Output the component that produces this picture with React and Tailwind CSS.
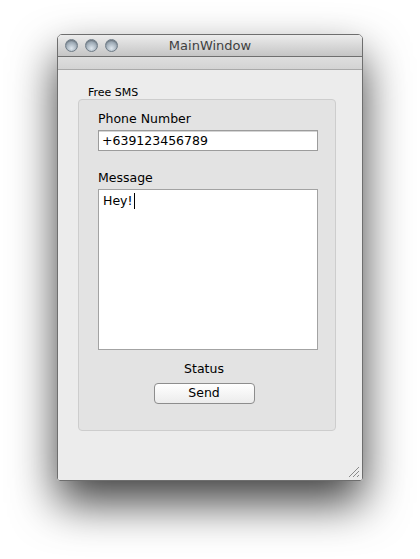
const font = { fontFamily: '"DejaVu Sans", "Liberation Sans", sans-serif' };

// traffic light button
function Light() {
  return (
    <div className="w-[13px] h-[13px] rounded-full border border-[#6f7c87] bg-[radial-gradient(circle_at_50%_75%,#dfe7ee_0%,#a2afba_55%,#7f8c98_100%)] shadow-[inset_0_1px_1px_rgba(0,0,0,0.25)]" />
  );
}

function ResizeGrip() {
  return (
    <svg width="12" height="12" viewBox="0 0 12 12" className="absolute right-[2px] bottom-[2px]">
      <line x1="1" y1="11" x2="11" y2="1" stroke="#8a8a8a" strokeWidth="1" />
      <line x1="5" y1="11" x2="11" y2="5" stroke="#8a8a8a" strokeWidth="1" />
      <line x1="9" y1="11" x2="11" y2="9" stroke="#8a8a8a" strokeWidth="1" />
    </svg>
  );
}

export default function App() {
  return (
    <div className="w-[420px] h-[559px] bg-white pt-[34px] pl-[57px]" style={font}>
      <div className="relative w-[306px] h-[447px] flex flex-col rounded-t-[5px] rounded-b-[3px] overflow-hidden border border-[#6e6e6e] shadow-[0_22px_45px_rgba(0,0,0,0.75)]">
        {/* title bar */}
        <div className="relative h-[22px] flex items-center px-[7px] gap-[7px] bg-gradient-to-b from-[#ececec] to-[#c5c5c5] border-b border-[#6f6f6f]">
          <Light />
          <Light />
          <Light />
          <div className="absolute inset-0 flex items-center justify-center text-[13px] text-[#3f3f3f]">
            MainWindow
          </div>
        </div>
        {/* toolbar strip */}
        <div className="h-[13px] bg-gradient-to-b from-[#dedede] to-[#d3d3d3] border-b border-[#a9a9a9]" />
        {/* content */}
        <div className="flex-1 bg-[#ececec] pl-[20px] pr-[26px] pt-[16px]">
          <div className="ml-[10px] text-[11px] leading-[13px] text-black">Free SMS</div>
          <div className="h-[332px] rounded-[4px] border border-[#cdcdcd] bg-[#e3e3e3] pl-[19px] pr-[17px] pt-[11px]">
            <div className="text-[12.5px] leading-[16px] text-black">Phone Number</div>
            <div className="mt-[3px] h-[21px] border border-[#9c9c9c] bg-white shadow-[inset_0_1px_0_#d4d4d4] px-[3px] text-[12.5px] leading-[19px] text-black">
              +639123456789
            </div>
            <div className="mt-[19px] text-[12.5px] leading-[16px] text-black">Message</div>
            <div className="mt-[3px] h-[161px] border border-[#a3a3a3] bg-white px-[4px] pt-[3px] text-[12.5px] leading-[16px] text-black flex">
              <span>Hey!</span>
              <span className="inline-block w-[1px] h-[16px] bg-black ml-[1px]" />
            </div>
            <div className="mt-[11px] mr-[8px] text-center text-[12.5px] leading-[16px] text-black">Status</div>
            <div className="mt-[6px] mr-[8px] flex justify-center">
              <div className="w-[101px] h-[21px] rounded-[4px] border border-[#8d8d8d] bg-gradient-to-b from-white to-[#ececec] flex items-center justify-center text-[12.5px] text-black">
                Send
              </div>
            </div>
          </div>
        </div>
        <ResizeGrip />
      </div>
    </div>
  );
}
